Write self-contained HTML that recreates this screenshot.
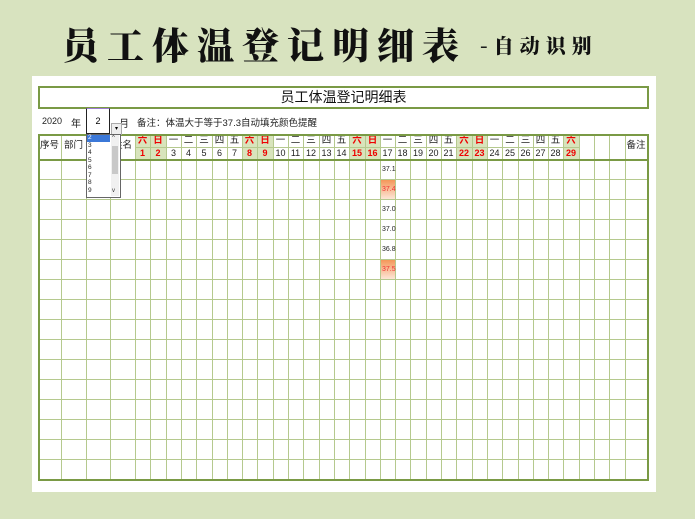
<!DOCTYPE html>
<html><head><meta charset="utf-8"><style>
body{margin:0;width:695px;height:519px;background:#d8e3bf;position:relative;overflow:hidden;font-family:"Liberation Sans","Noto Sans CJK SC",sans-serif}
.a{position:absolute}
#panel{left:32px;top:76px;width:624px;height:416px;background:#fff}
.t{font-family:"Noto Serif CJK SC","Noto Sans CJK SC",serif;font-weight:900;color:#111}
.vl{position:absolute;width:1px;background:#b5c98e}
.hl{position:absolute;height:1px;background:#b5c98e}
.c{position:absolute;font-size:9px;text-align:center;line-height:12px;color:#222}
.r{color:#e00;font-weight:bold}
.g{background:#d8e4bc}
</style></head><body>
<div class="a t" style="left:62px;top:18px;font-size:37px;letter-spacing:8px;line-height:50px">员工体温登记明细表</div>
<div class="a t" style="left:480px;top:28px;font-size:20px;letter-spacing:6px;line-height:34px">-自动识别</div>
<div id="panel" class="a"></div>
<div class="a" style="left:38px;top:86px;width:607px;height:19px;border:2px solid #7a9a45;text-align:center;font-size:14px;line-height:19px;color:#111">员工体温登记明细表</div>
<div class="a" style="left:42px;top:116px;font-size:9px;color:#222">2020</div>
<div class="a" style="left:71px;top:115px;font-size:10px;color:#222">年</div>
<div class="a" style="left:119px;top:115px;font-size:10px;color:#222">月</div>
<div class="a" style="left:137px;top:115px;font-size:9.5px;color:#222">备注：体温大于等于37.3自动填充颜色提醒</div>
<div id="tb"></div>
<div class="a" style="left:86px;top:108px;width:22px;height:24px;border:1px solid #222;border-top:1px solid #9a7ad0;background:#fff;text-align:center;font-size:9px;line-height:24px">2</div>
<div class="a" style="left:111px;top:123px;width:9px;height:10px;background:#eee;border:1px solid #aaa;font-size:6px;line-height:10px;text-align:center">▾</div>
<div class="a" style="left:86px;top:134px;width:33px;height:62px;border:1px solid #666;background:#fff"></div>
<div class="a" style="left:87px;top:135px;width:23px;height:7px;background:#3b78d8"></div>
<div class="a" style="left:88px;top:134px;font-size:6.5px;line-height:7.5px;color:#222">
<span style="color:#fff">2</span><br>3<br>4<br>5<br>6<br>7<br>8<br>9</div>
<div class="a" style="left:111px;top:135px;width:8px;height:61px;background:#f0f0f0"></div>
<div class="a" style="left:112px;top:146px;width:6px;height:28px;background:#c8c8c8"></div>
<div class="a" style="left:112px;top:135px;font-size:6px;color:#333">^</div>
<div class="a" style="left:112px;top:188px;font-size:6px;color:#333">v</div>
<script>
var tb=document.getElementById('tb'),h='';
var xs=[38,61,86,110,135];for(var k=1;k<=32;k++)xs.push(Math.round(135+15.3*k));xs.push(647);
var L=38,R=647,T=134,B=479;
var wd=['六','日','一','二','三','四','五'];
for(var d=1;d<=29;d++){var x=xs[3+d],w=xs[4+d]-x;var wk=wd[(d-1)%7];var we=(wk=='六'||wk=='日');
h+='<div class="c'+(we?' g r':'')+'" style="left:'+x+'px;top:134px;width:'+w+'px;height:13px;line-height:13px;font-size:9.5px">'+wk+'</div>';
h+='<div class="c'+(we?' g r':'')+'" style="left:'+x+'px;top:147px;width:'+w+'px;height:12px;font-size:9px">'+d+'</div>';}
h+='<div class="c" style="left:38px;top:140px;width:23px;font-size:9.5px">序号</div>';
h+='<div class="c" style="left:61px;top:140px;width:25px;font-size:9.5px">部门</div>';
h+='<div class="c" style="left:110px;top:140px;width:25px;font-size:9.5px">姓名</div>';
h+='<div class="c" style="left:625px;top:140px;width:22px;font-size:9.5px">备注</div>';
for(var i=1;i<xs.length-1;i++){var x=xs[i];
h+='<div class="vl" style="left:'+x+'px;top:'+T+'px;height:'+(B-T)+'px"></div>';}
h+='<div class="hl" style="left:135px;top:147px;width:'+(579-135)+'px"></div>';
for(var y=159;y<B;y+=20)h+='<div class="hl" style="left:'+L+'px;top:'+y+'px;width:'+(R-L)+'px;'+(y==159?'background:#7a9a45;height:2px':'')+'"></div>';
var v=['37.1','37.4','37.0','37.0','36.8','37.5'];var cx=xs[20];
for(var i=0;i<6;i++){var y=160+20*i;var hot=(v[i]=='37.4'||v[i]=='37.5');
h+='<div class="c" style="left:'+(cx+1)+'px;top:'+y+'px;width:'+(xs[21]-cx-1)+'px;height:19px;line-height:19px;font-size:7px;text-align:left;padding-left:1px;box-sizing:border-box;'+(hot?'background:linear-gradient(#f4975a,#fde5d6);color:#e33':'')+'">'+v[i]+'</div>';}
h+='<div class="a" style="left:'+L+'px;top:'+T+'px;width:'+(R-L-2)+'px;height:'+(B-T-2)+'px;border:2px solid #7a9a45"></div>';
tb.innerHTML=h;
</script>
</body></html>
